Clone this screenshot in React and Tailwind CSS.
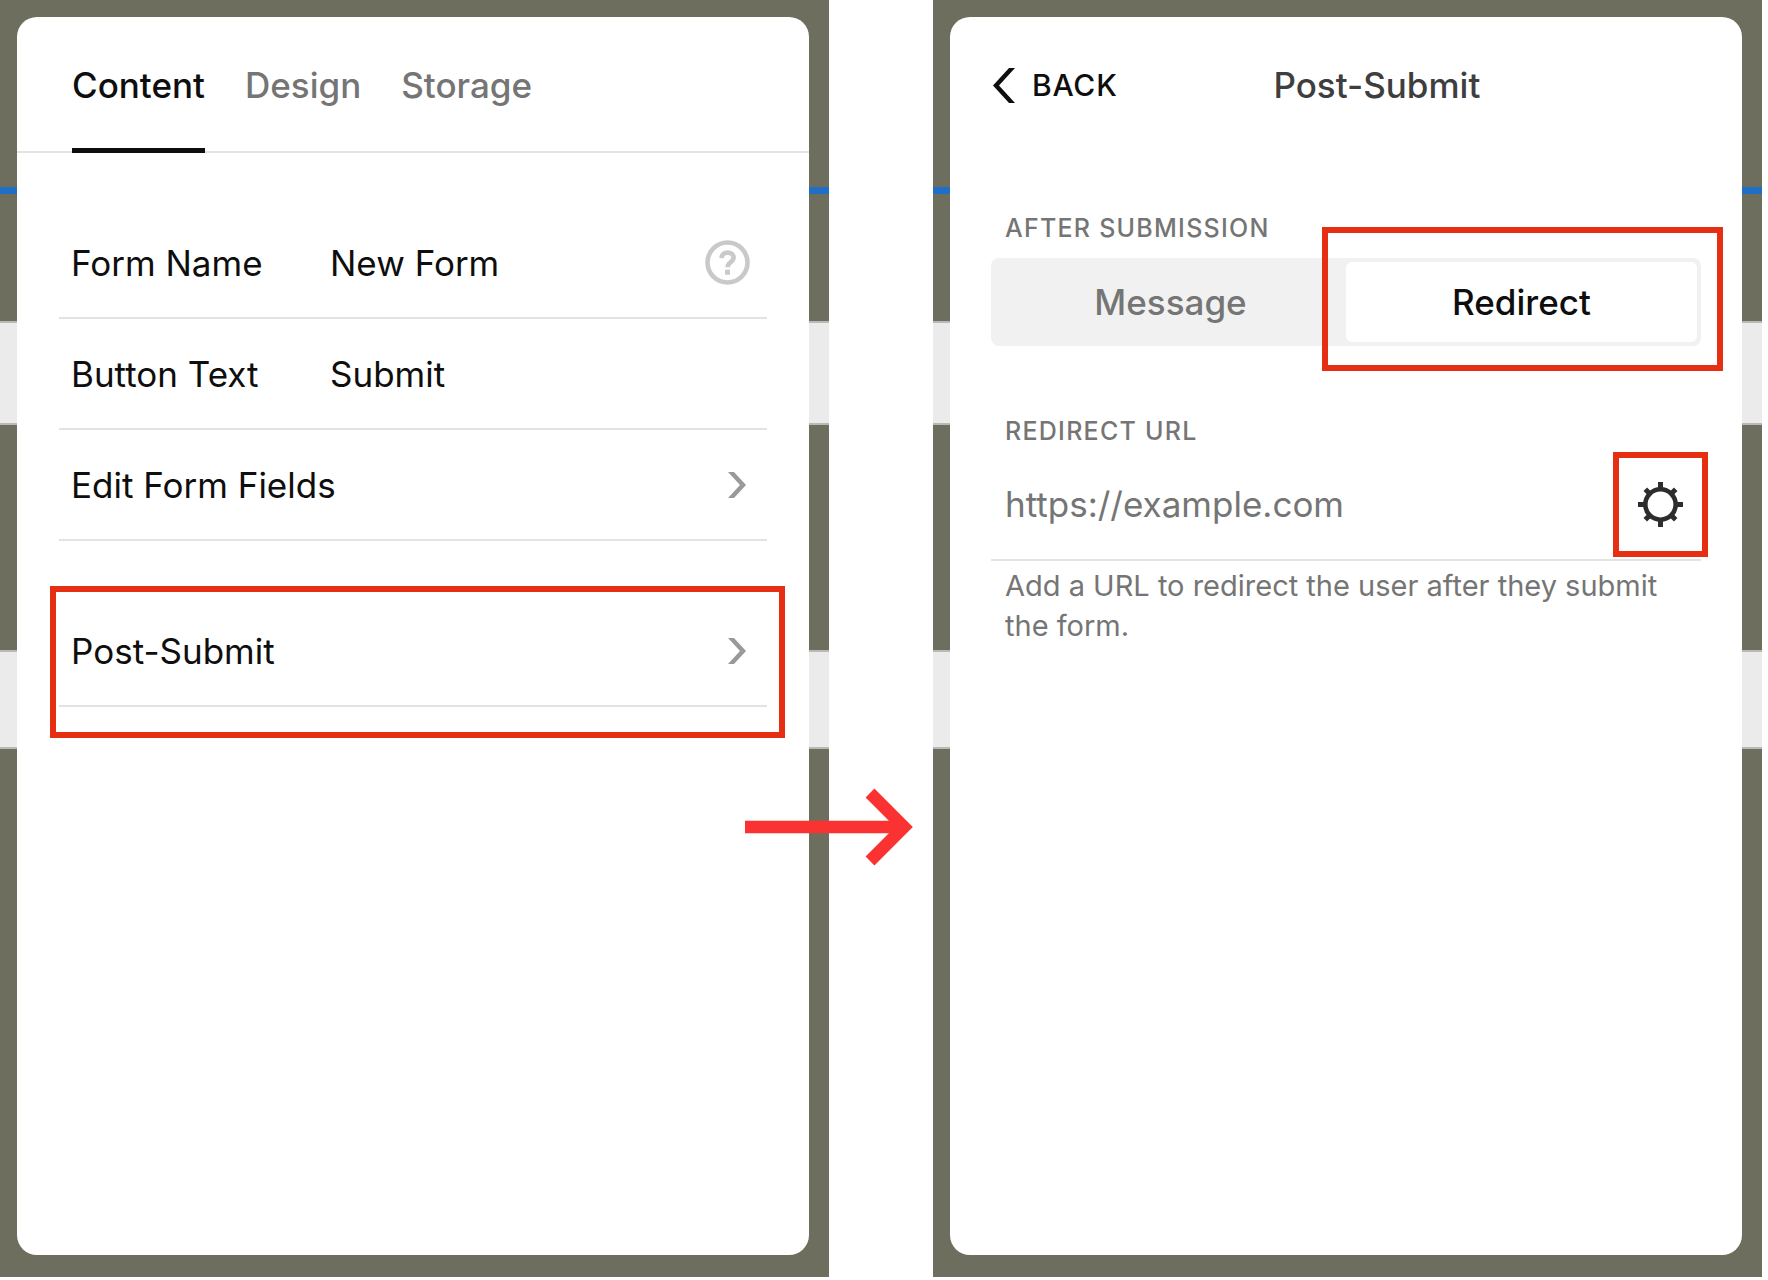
import { useState } from 'react'

const tabs = ['Content', 'Design', 'Storage']
const submitModes = ['Message', 'Redirect']

function Stage({ children }) {
  return (
    <section className="relative min-w-0 flex-1 bg-[#6d6e5e] pt-[17px] pr-5 pb-[22px] pl-[17px]">
      {/* page being edited, visible around the edges of the panel */}
      <div aria-hidden="true" className="absolute inset-0 flex flex-col">
        <div className="mt-[187px] h-[7px] bg-[#1f6fc9]" />
        <div className="mt-[127px] h-[104px] border-y-2 border-[#b9b9b7] bg-[#ebebeb]" />
        <div className="mt-[225px] h-[99px] border-y-2 border-[#b9b9b7] bg-[#ebebeb]" />
      </div>
      <div className="relative min-h-[1238px] rounded-[20px] bg-white">{children}</div>
    </section>
  )
}

function Highlight({ className }) {
  return (
    <div
      aria-hidden="true"
      className={`pointer-events-none absolute border-[6px] border-[#e62e12] ${className}`}
    />
  )
}

function ChevronRight() {
  return (
    <svg className="mr-[9px] h-[26px] w-[18px]" viewBox="0 0 18 26" fill="#999">
      <path d="M0 0h6L18 13 6 26H0l12-13z" />
    </svg>
  )
}

function HelpIcon() {
  return (
    <svg className="h-[45px] w-[45px]" viewBox="0 0 45 45" fill="none" stroke="#c9c9c9">
      <circle cx="22.5" cy="22.5" r="20" strokeWidth="4.6" />
      <path
        d="M16.5 18.2c.2-3.6 2.7-5.6 6.2-5.6 3.5 0 5.9 2 5.9 5 0 4.6-6.1 4.7-6.1 9.6"
        strokeWidth="4.6"
      />
      <path d="M22.5 29.7v5" strokeWidth="5" />
    </svg>
  )
}

function GearIcon() {
  return (
    <svg className="h-[45px] w-[45px]" viewBox="0 0 45 45" fill="none" stroke="#2d2d2d">
      <circle cx="22.5" cy="22.5" r="15.2" strokeWidth="4.6" />
      {[0, 45, 90, 135, 180, 225, 270, 315].map((angle) => (
        <path
          key={angle}
          d={angle % 90 === 0 ? 'M22.5 0v7' : 'M22.5 1v6'}
          strokeWidth="5"
          transform={`rotate(${angle} 22.5 22.5)`}
        />
      ))}
    </svg>
  )
}

function FieldRow({ id, label, value, onChange, children }) {
  return (
    <div className="flex h-[111px] items-center border-b-2 border-[#e3e3e3] px-3">
      <label htmlFor={id} className="w-[259px] shrink-0">
        {label}
      </label>
      <input
        id={id}
        type="text"
        value={value}
        onChange={(e) => onChange(e.target.value)}
        className="min-w-0 flex-1 bg-transparent outline-none"
      />
      {children}
    </div>
  )
}

function LinkRow({ label }) {
  return (
    <button
      type="button"
      className="flex h-[111px] w-full items-center justify-between border-b-2 border-[#e3e3e3] px-3 text-left"
    >
      {label}
      <ChevronRight />
    </button>
  )
}

function FormPanel() {
  const [activeTab, setActiveTab] = useState('Content')
  const [formName, setFormName] = useState('New Form')
  const [buttonText, setButtonText] = useState('Submit')

  return (
    <Stage>
      <div role="tablist" className="flex h-[136px] gap-10 border-b-2 border-[#e3e3e3] px-[55px]">
        {tabs.map((tab) => (
          <button
            key={tab}
            type="button"
            role="tab"
            aria-selected={tab === activeTab}
            onClick={() => setActiveTab(tab)}
            className={`-mb-[2px] border-b-[5px] pt-1 text-[35px] leading-10 font-medium ${
              tab === activeTab ? 'border-[#0e0e0e] text-[#0e0e0e]' : 'border-transparent text-[#757575]'
            }`}
          >
            {tab}
          </button>
        ))}
      </div>

      <div className="px-[42px] pt-[55px] text-[35px] leading-10 text-[#0e0e0e]">
        <FieldRow id="form-name" label="Form Name" value={formName} onChange={setFormName}>
          <button type="button" aria-label="Help" className="mr-[5px]">
            <HelpIcon />
          </button>
        </FieldRow>
        <FieldRow id="button-text" label="Button Text" value={buttonText} onChange={setButtonText} />
        <LinkRow label="Edit Form Fields" />
        <div className="relative mt-[55px]">
          <LinkRow label="Post-Submit" />
          <Highlight className="-top-[10px] -right-[18px] -bottom-[31px] -left-[9px]" />
        </div>
      </div>
    </Stage>
  )
}

function PostSubmitPanel() {
  const [mode, setMode] = useState('Redirect')
  const [url, setUrl] = useState('')

  return (
    <Stage>
      <header className="flex h-[136px] items-center px-[43px]">
        <button
          type="button"
          className="flex items-center gap-[17px] text-[30px] leading-10 font-medium tracking-wide text-[#0e0e0e]"
        >
          <svg className="h-[35px] w-[22px]" viewBox="0 0 22 35" fill="#0e0e0e">
            <path d="M16 0H22L6 17.5 22 35h-6L0 17.5z" />
          </svg>
          BACK
        </button>
        <h2 className="ml-[156px] text-[35px] leading-10 font-medium text-[#3e3e3e]">Post-Submit</h2>
      </header>

      <div className="px-[41px] pt-[59px]">
        <h3 id="after-submission" className="px-[14px] text-[25px] leading-8 font-medium tracking-wider text-[#757575]">
          AFTER SUBMISSION
        </h3>
        <div className="relative mt-[14px]">
          <div
            role="group"
            aria-labelledby="after-submission"
            className="flex h-[88px] rounded-[8px] bg-[#f1f1f1] p-1"
          >
            {submitModes.map((item) => (
              <button
                key={item}
                type="button"
                aria-pressed={item === mode}
                onClick={() => setMode(item)}
                className={`flex-1 rounded-[6px] text-[35px] leading-10 font-medium ${
                  item === mode ? 'bg-white text-[#0e0e0e]' : 'text-[#757575]'
                }`}
              >
                {item}
              </button>
            ))}
          </div>
          <Highlight className="-top-[31px] -right-[22px] -bottom-[25px] left-[331px]" />
        </div>

        <label
          htmlFor="redirect-url"
          className="mt-[69px] block px-[14px] text-[25px] leading-8 font-medium tracking-wider text-[#757575]"
        >
          REDIRECT URL
        </label>
        <div className="mt-[2px] flex h-[112px] items-center border-b-2 border-[#e3e3e3] pl-[14px]">
          <input
            id="redirect-url"
            type="url"
            value={url}
            onChange={(e) => setUrl(e.target.value)}
            placeholder="https://example.com"
            className="min-w-0 flex-1 bg-transparent text-[35px] leading-10 outline-none placeholder:text-[#757575]"
          />
          <div className="relative mr-[18px] flex">
            <button type="button" aria-label="Link settings">
              <GearIcon />
            </button>
            <Highlight className="-inset-x-[25px] -inset-y-[30px]" />
          </div>
        </div>
        <p className="mt-[5px] px-[14px] text-[29px] leading-10 text-[#757575]">
          Add a URL to redirect the user after they submit the form.
        </p>
      </div>
    </Stage>
  )
}

export default function App() {
  return (
    <div className="min-h-screen bg-white font-['Inter',sans-serif]">
      <main className="flex pr-[6px]">
        <FormPanel />
        <div className="relative w-[104px] shrink-0">
          <svg
            className="absolute top-[788px] -left-[84px] z-10 h-[78px] w-[168px]"
            viewBox="0 0 168 78"
            fill="none"
            stroke="#fb3232"
            strokeWidth="12.5"
          >
            <path d="M0 39h158M125 5l34 34-34 34" />
          </svg>
        </div>
        <PostSubmitPanel />
      </main>
    </div>
  )
}
